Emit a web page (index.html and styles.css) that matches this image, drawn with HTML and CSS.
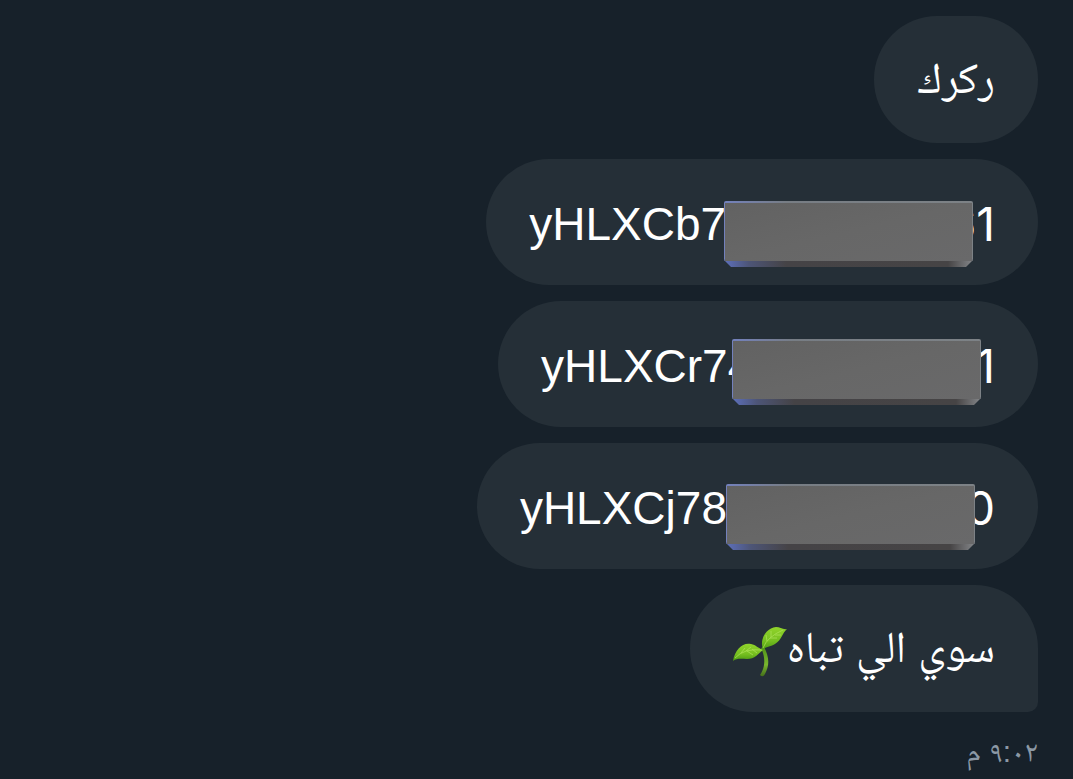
FILE: index.html
```
<!DOCTYPE html>
<html lang="ar" dir="rtl">
<head>
<meta charset="utf-8">
<meta name="viewport" content="width=device-width, initial-scale=1">
<title>محادثة</title>
<link rel="stylesheet" href="styles.css">
</head>
<body>
<svg class="defs" aria-hidden="true">
  <defs>
    <linearGradient id="face" x1="0" y1="0" x2="1" y2="1">
      <stop offset="0" stop-color="#626262"/><stop offset=".5" stop-color="#676767"/><stop offset="1" stop-color="#69696a"/>
    </linearGradient>
    <linearGradient id="base">
      <stop offset="0" stop-color="#5d70bd"/><stop offset=".1" stop-color="#4d5577"/><stop offset=".25" stop-color="#454346"/><stop offset=".9" stop-color="#464445"/><stop offset="1" stop-color="#85878a"/>
    </linearGradient>
    <linearGradient id="edge">
      <stop offset="0" stop-color="#7381bd"/><stop offset=".25" stop-color="#777d84"/><stop offset="1" stop-color="#7d8286"/>
    </linearGradient>
    <symbol id="slab" viewBox="0 0 249 66">
      <path d="M0 59h249l-7 7H7z" fill="url(#base)"/>
      <rect width="249" height="60" rx="2" fill="url(#edge)"/>
      <rect x="1" y="2" width="247" height="58" fill="url(#face)"/>
    </symbol>
    <linearGradient id="leaf" x1="0" y1="0" x2="0" y2="1">
      <stop offset="0" stop-color="#91d42b"/><stop offset=".6" stop-color="#76bf20"/><stop offset="1" stop-color="#4a9812"/>
    </linearGradient>
    <linearGradient id="stem" x1="0" y1="0" x2="0" y2="1">
      <stop offset="0" stop-color="#4f9218"/><stop offset=".6" stop-color="#79b62e"/><stop offset="1" stop-color="#446f1b"/>
    </linearGradient>
  </defs>
</svg>
<main class="chat">
  <p class="bubble">ركرك</p>
  <p class="bubble code" dir="ltr"><span>yHLXCb7a</span><span class="hidden-part first"><svg class="slab" aria-hidden="true"><use href="#slab"/></svg></span><span class="tail">61</span></p>
  <p class="bubble code" dir="ltr"><span>yHLXCr74</span><span class="hidden-part second"><svg class="slab" aria-hidden="true"><use href="#slab"/></svg></span><span class="tail">1</span></p>
  <p class="bubble code" dir="ltr"><span>yHLXCj78</span><span class="hidden-part third"><svg class="slab" aria-hidden="true"><use href="#slab"/></svg></span><span class="tail">0</span></p>
  <p class="bubble last"><span>سوي الي تباه</span><svg class="seedling" viewBox="0 0 54 50" role="img" aria-label="نبتة">
    <path d="M28 21C33 31 32 41 27 48q3 3 5-1C37 38 36 29 31 20z" fill="url(#stem)"/>
    <path d="M0 34C2 22 10 15 18 17c5 1 7 4 12 6-5 4-8 9-16 9-6 0-10-1-14 2z" fill="url(#leaf)"/>
    <path d="M30 23C26 11 34 1 43 0c4 0 7 3 11 2-5 4-5 11-12 15-5 3-9 2-12 6z" fill="url(#leaf)"/>
    <path d="M2 31Q11 21 29 23M8 26l4-5M13 24l5-4M14 24l6 4M19 22l5 4M30 21Q34 10 50 3M34 14l-1-6M38 10l0-6M37 11l7 0M42 8l6 0" fill="none" stroke="#b0e45c" stroke-width=".7"/>
  </svg></p>
  <time class="time" datetime="21:02">٩:٠٢ م</time>
</main>
</body>
</html>
```
FILE: styles.css
```
body {
  margin: 0;
  background: #17212a;
  color: #fff;
  font-family: "Liberation Sans", "Noto Naskh Arabic", "Noto Sans Arabic", "DejaVu Sans", sans-serif;
}
.defs { position: absolute; width: 0; height: 0; }
.chat {
  display: flex;
  flex-direction: column;
  align-items: flex-start;
  gap: 16px;
  padding: 16px 35px 0;
}
.bubble {
  display: flex;
  align-items: center;
  margin: 0;
  padding: 32px 43px 35px;
  border-radius: 63px;
  background: #252f37;
  font-size: 44px;
  line-height: 60px;
}
.code {
  padding: 35px 43px 31px;
  font-size: 46px;
}
.tail { font-family: Inter, "Liberation Sans", sans-serif; }
.last { border-bottom-right-radius: 10px; }
.hidden-part { flex: none; position: relative; height: 60px; }
.first { width: 196px; }
.second { width: 223px; }
.third { width: 239px; }
.slab { position: absolute; width: 249px; height: 66px; }
.first .slab { left: -28px; top: 7px; }
.second .slab { left: -21px; top: 3px; }
.third .slab { left: -1px; top: 6px; }
.seedling {
  align-self: flex-end;
  width: 54px;
  height: 50px;
}
.time {
  color: #8b98a5;
  font-size: 30px;
  line-height: 48px;
}
```
